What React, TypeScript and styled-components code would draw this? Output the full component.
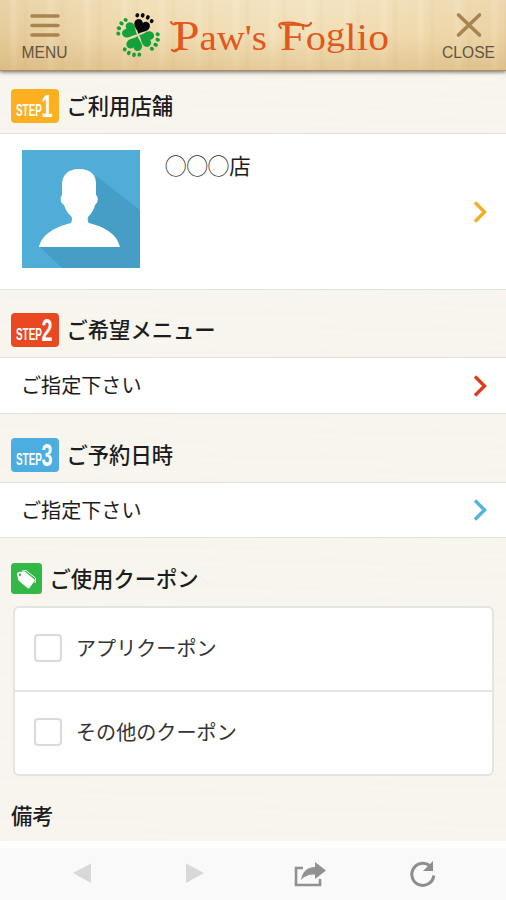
import React from "react";
import styled, { createGlobalStyle } from "styled-components";

const GlobalStyle = createGlobalStyle`
  * { box-sizing: border-box; }
  body { margin: 0; background: #f8f5ee; }
`;

const Page = styled.main`
  width: 506px;
  height: 900px;
  overflow: hidden;
  display: flex;
  flex-direction: column;
  background:
    repeating-linear-gradient(1deg, rgba(255, 255, 255, 0.1) 0 2px, rgba(236, 228, 214, 0.04) 4px 6px, transparent 8px 13px),
    #f8f5ee;
  color: #1c1c1c;
  font-family: "Noto Sans CJK JP", sans-serif;
`;

const Header = styled.header`
  flex: none;
  height: 71px;
  display: flex;
  justify-content: space-between;
  background:
    linear-gradient(rgba(255, 255, 255, 0.15), rgba(255, 240, 200, 0) 50%, rgba(190, 145, 68, 0.26)),
    repeating-linear-gradient(90deg, transparent 0 9px, rgba(255, 246, 218, 0.16) 12px 15px, transparent 19px 22px, rgba(190, 145, 78, 0.07) 25px, transparent 29px 37px),
    linear-gradient(90deg, rgba(180, 135, 65, 0.16), transparent 22%, rgba(255, 248, 224, 0.24) 60%, transparent 85%, rgba(180, 135, 65, 0.08)),
    #eed8ab;
  border-bottom: 1px solid #a58e66;
  box-shadow: 0 1px 4px rgba(60, 55, 45, 0.75);
  z-index: 1;
`;

const HeaderButton = styled.button<{ $width: number }>`
  width: ${(p) => p.$width}px;
  padding: 12px 0 0;
  display: flex;
  flex-direction: column;
  align-items: center;
  border: 0;
  background: none;
  color: #625444;
  font: 15.6px/20px "Liberation Sans", sans-serif;
`;

const HeaderIcon = styled.svg`
  width: 30px;
  height: 28px;
  margin-bottom: 3px;
  fill: none;
  stroke: #a88450;
  stroke-width: 3.6;
  stroke-linecap: round;
`;

const Logo = styled.svg`
  width: 290px;
  height: 70px;
  margin-right: 14px;
  fill: #e2581c;
  font-family: "Liberation Serif", serif;
`;

const Swash = styled.path`
  fill: none;
  stroke: #e2581c;
  stroke-width: 2.2;
  stroke-linecap: round;
`;

const Heading = styled.h2<{ $height: number }>`
  flex: none;
  height: ${(p) => p.$height}px;
  margin: 0;
  padding: 0 11px 10px;
  display: flex;
  align-items: flex-end;
  gap: 7.5px;
  font-size: 21.3px;
  font-weight: 500;
  line-height: 36px;
`;

const StepBadge = styled.svg`
  width: 48px;
  height: 34px;
  fill: #fff;
  font-family: "Liberation Sans", sans-serif;
  font-weight: 700;
`;

const Row = styled.div<{ $height: number }>`
  flex: none;
  height: ${(p) => p.$height}px;
  padding: 0 18px 0 21px;
  display: flex;
  align-items: center;
  justify-content: space-between;
  background: #fff;
  border: solid #e0e0df;
  border-width: 1px 0;
  font-size: 20.1px;
  line-height: 30px;
`;

const RowText = styled.span`
  padding-bottom: 1px;
`;

const Shop = styled.div`
  padding: 0 0 6px 1px;
  display: flex;
  gap: 25px;
  font-size: 21.4px;
`;

const Avatar = styled.svg`
  width: 118px;
  height: 118px;
`;

const Chevron = styled.svg`
  width: 15px;
  height: 24px;
  fill: none;
  stroke-width: 3.4;
`;

const CouponIcon = styled.svg`
  width: 31px;
  height: 31px;
  margin-bottom: 2px;
`;

const Card = styled.div`
  flex: none;
  height: 170px;
  margin: 0 12px 0 13px;
  display: grid;
  grid-template-rows: 82px 1fr;
  background: #fff;
  border: 2px solid #e4e4e2;
  border-radius: 6px;
`;

const Option = styled.label`
  padding: 0 0 3px 19px;
  display: flex;
  align-items: center;
  gap: 14px;
  font-size: 20.1px;
  line-height: 28px;
  color: #333;
  & + & { border-top: 2px solid #e4e4e2; }
`;

const CheckBox = styled.span`
  width: 28px;
  height: 28px;
  border: 2px solid #dadada;
  border-radius: 4px;
`;

const Remarks = styled.h2`
  flex: none;
  height: 65px;
  margin: 0;
  padding: 23px 11px 0;
  font-size: 21.3px;
  font-weight: 500;
  line-height: 31px;
`;

const BottomBar = styled.nav`
  flex: 1;
  padding: 0 27px 0 25px;
  display: grid;
  grid-template-columns: repeat(4, 1fr);
  place-items: center;
  background: #f9f9f9;
  border-top: 7px solid #fefefd;
`;

const NavIcon = styled.svg`
  width: 34px;
  height: 34px;
  fill: #919191;
`;

function Leaf({ angle, color }: { angle: number; color: string }) {
  return (
    <g transform={`rotate(${angle})`} fill={color}>
      <path d="M0-1C-2-5-8-6-8-11C-8-16-2-17 0-13C2-17 8-16 8-11C8-6 2-5 0-1Z" />
      <ellipse cx="-8" cy="-18" rx="1.9" ry="2.1" />
      <ellipse cx="-3" cy="-20" rx="1.9" ry="2.3" />
      <ellipse cx="2.5" cy="-20" rx="1.9" ry="2.3" />
      <ellipse cx="7.5" cy="-18" rx="1.9" ry="2.1" />
    </g>
  );
}

function Step({ number, color }: { number: number; color: string }) {
  return (
    <StepBadge viewBox="0 0 48 34">
      <rect width="48" height="34" rx="4" fill={color} />
      <text transform="translate(5 27) scale(.62 1)" fontSize="16">
        STEP<tspan dx="-0.5" dy="1" fontSize="32">{number}</tspan>
      </text>
    </StepBadge>
  );
}

function Arrow({ color }: { color: string }) {
  return <Chevron viewBox="0 0 15 24" stroke={color}><path d="M2 2.5 11.5 12 2 21.5" /></Chevron>;
}

export default function App() {
  return (
    <>
      <GlobalStyle />
      <Page>
        <Header>
          <HeaderButton $width={89}>
            <HeaderIcon viewBox="0 0 30 28"><path d="M2 4H28M2 13.5H28M2 23H28" /></HeaderIcon>
            MENU
          </HeaderButton>
          <Logo viewBox="108 0 290 70">
            <g transform="translate(138 35)">
              <Leaf angle={22} color="#080808" />
              <Leaf angle={112} color="#12a13a" />
              <Leaf angle={200} color="#12a13a" />
              <Leaf angle={298} color="#12a13a" />
            </g>
            <text x="173" y="50" fontSize="43" textLength="94" lengthAdjust="spacingAndGlyphs">
              P<tspan fontSize="35">aw's</tspan>
            </text>
            <text x="280" y="50" fontSize="41" textLength="109" lengthAdjust="spacingAndGlyphs">
              F<tspan fontSize="36">o</tspan><tspan dy="-4" fontSize="34">g</tspan><tspan dy="4" fontSize="37">lio</tspan>
            </text>
            <Swash d="M178 23Q172 26 171 22M179 48Q176 53 172 50" />
            <Swash d="M281 28Q277 24 282 23Q290 22 299 24Q309 28 311 23" />
          </Logo>
          <HeaderButton $width={75}>
            <HeaderIcon viewBox="0 0 30 28"><path d="M4.5 3 25.5 23M25.5 3 4.5 23" /></HeaderIcon>
            CLOSE
          </HeaderButton>
        </Header>

        <Heading $height={62}><Step number={1} color="#fbb021" />ご利用店舗</Heading>
        <Row $height={157}>
          <Shop>
            <Avatar viewBox="0 0 118 118">
              <path fill="#50add7" d="M0 0H118V118H0Z" />
              <path fill="#469dc5" d="M74 26 118 60V118H40L18 97 65 78Z" />
              <path fill="#fff" d="M17 97C20 84 33 77 49 73Q51 69 49 66C45 63 43 58 42 55C38 53 38 47 40 45V38C39 25 46 19 57 19C69 19 75 25 74 37V45C77 47 76 53 73 55C72 60 69 64 66 67Q65 71 67 73C83 77 95 84 98 97Z" />
            </Avatar>
            ◯◯◯店
          </Shop>
          <Arrow color="#efae20" />
        </Row>

        <Heading $height={67}><Step number={2} color="#e94820" />ご希望メニュー</Heading>
        <Row $height={57}><RowText>ご指定下さい</RowText><Arrow color="#dc3c18" /></Row>

        <Heading $height={68}><Step number={3} color="#4bade0" />ご予約日時</Heading>
        <Row $height={56}><RowText>ご指定下さい</RowText><Arrow color="#52b3e1" /></Row>

        <Heading $height={68}>
          <CouponIcon viewBox="0 0 31 31">
            <rect width="31" height="31" rx="3.5" fill="#32b847" />
            <path d="M11 8 15 7.5 24.5 15 24 20" fill="none" stroke="#fff" strokeWidth="1" />
            <path fill="#fff" fillRule="evenodd" d="M6 11Q6 9 8 9L13 8.5Q14 8.5 15 9.5L23 16Q24 17 23.5 18L18.5 25Q17.5 26 16.5 25L8 18Q7 17 7 16ZM9 10.5A1.2 1.2 0 1 0 9 12.9A1.2 1.2 0 1 0 9 10.5" />
          </CouponIcon>
          ご使用クーポン
        </Heading>
        <Card>
          <Option><CheckBox />アプリクーポン</Option>
          <Option><CheckBox />その他のクーポン</Option>
        </Card>
        <Remarks>備考</Remarks>

        <BottomBar>
          <NavIcon viewBox="0 0 34 34"><path fill="#d8d8d8" d="M8 16 26 6.5V26Z" /></NavIcon>
          <NavIcon viewBox="0 0 34 34"><path fill="#d8d8d8" d="M26 16 8 6.5V26Z" /></NavIcon>
          <NavIcon viewBox="0 0 34 34">
            <path d="M11 11H4V28H28V22" fill="none" stroke="#919191" strokeWidth="2.6" />
            <path d="M23 5 34 13.5 23 22V17.5Q14 17 9 23Q11 10.5 23 10Z" />
          </NavIcon>
          <NavIcon viewBox="0 0 34 34">
            <path d="M25 9A11 11 0 1 0 28.8 18.5" fill="none" stroke="#8d8d8d" strokeWidth="3" />
            <path d="M28 4V14H18Z" fill="#8d8d8d" />
          </NavIcon>
        </BottomBar>
      </Page>
    </>
  );
}
